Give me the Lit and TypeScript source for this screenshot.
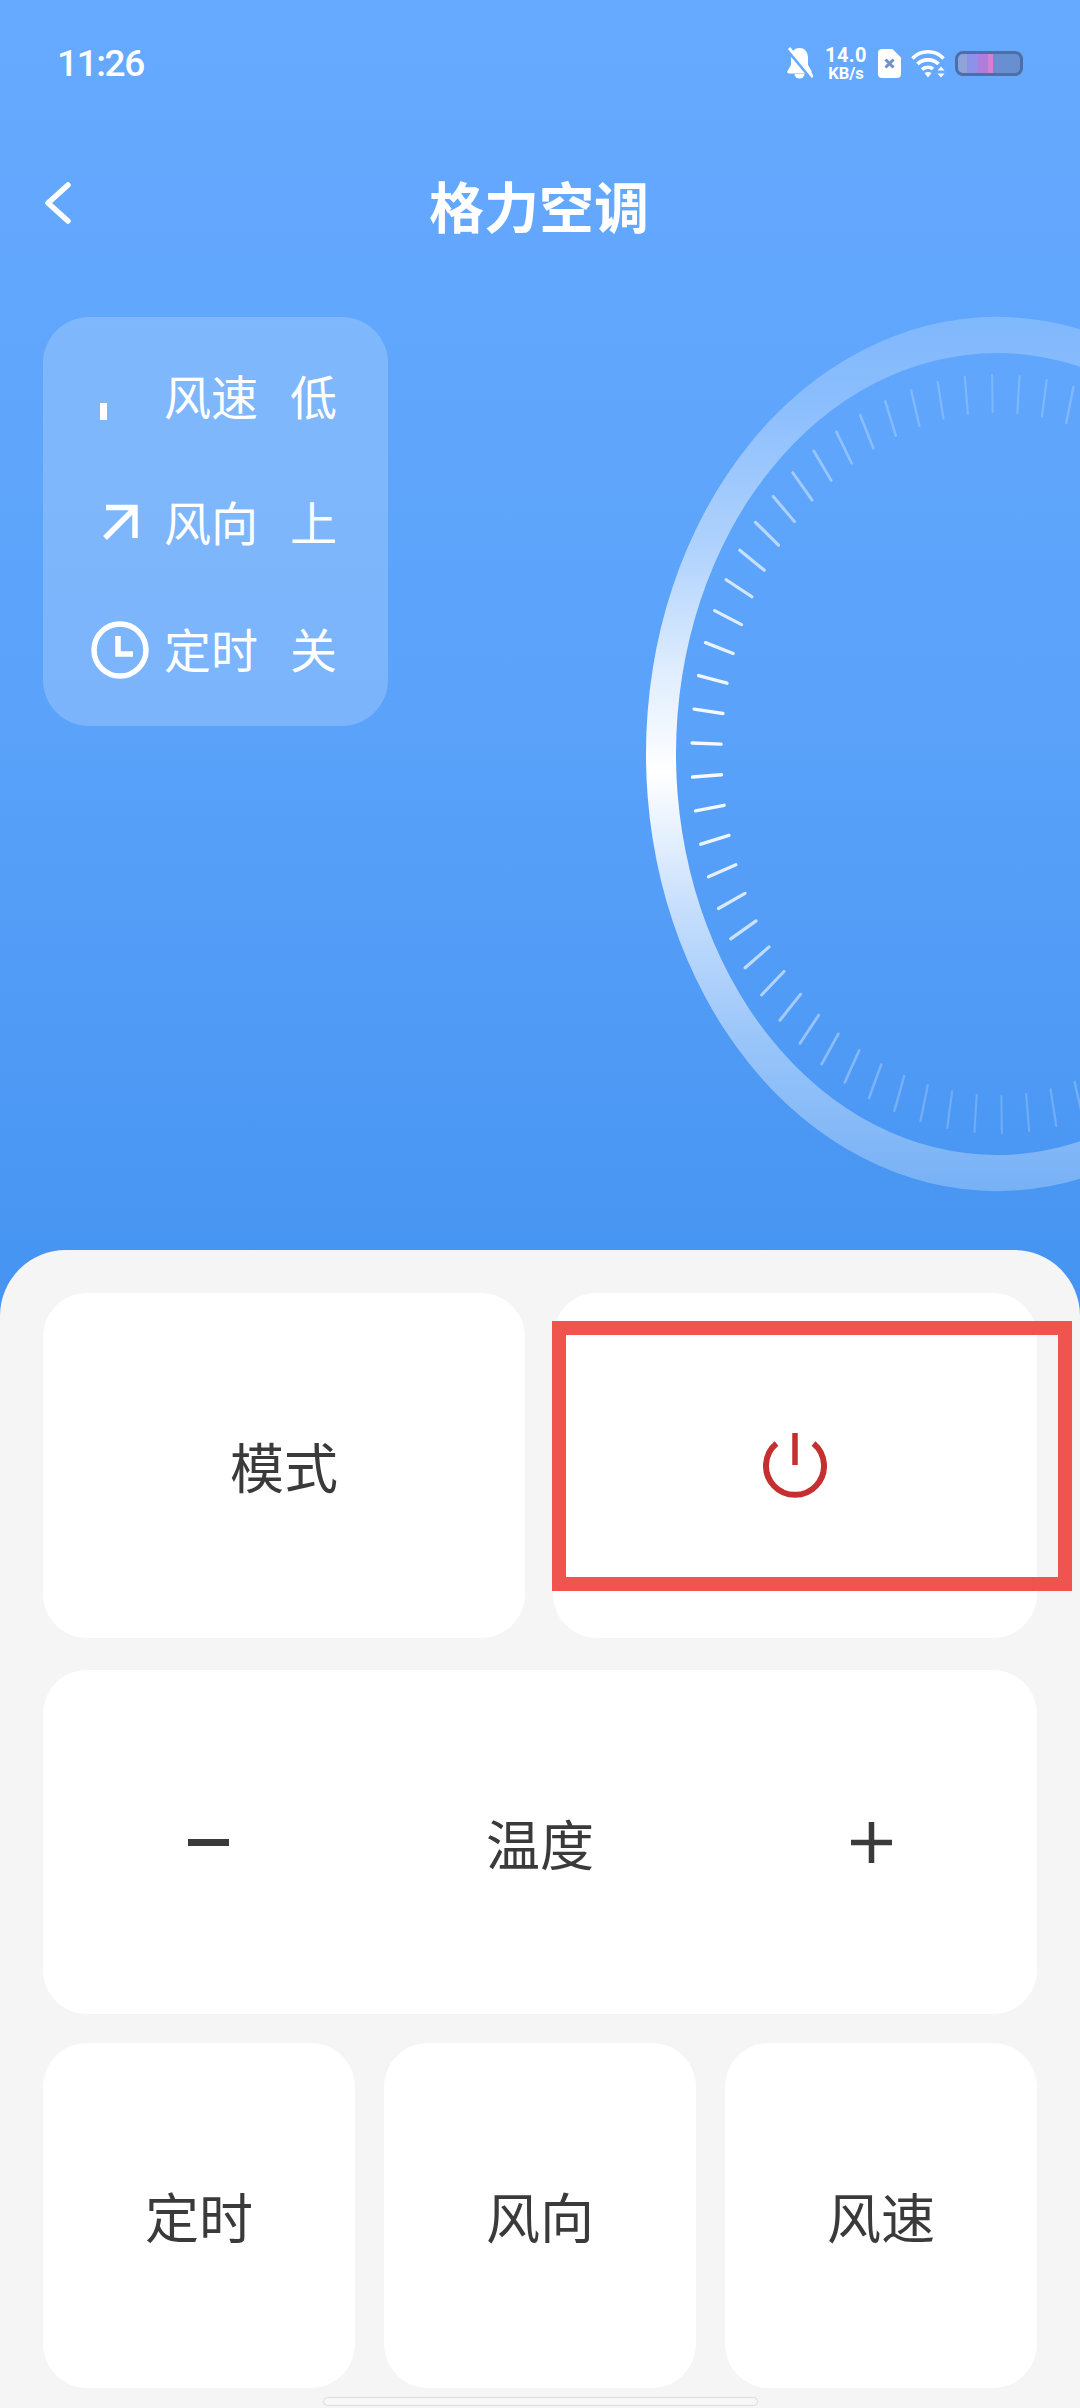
import { LitElement, html, css, svg } from 'lit';
import { customElement } from 'lit/decorators.js';

// dial is an ellipse in the reference, everything measured from the screenshot
const CX = 997;
const CY = 754;
const TICK_COUNT = 70;

function dialTicks() {
  const out = [];
  for (let k = 0; k < TICK_COUNT; k++) {
    const deg = 1.66 + (k * 360) / TICK_COUNT;
    const a = (deg * Math.PI) / 180;
    const c = Math.cos(a);
    const s = Math.sin(a);
    const x1 = CX - 305 * c;
    const y1 = CY - 379 * s;
    const x2 = CX - 276 * c;
    const y2 = CY - 342 * s;
    if (x2 > 1090) continue;
    const alpha = 0.2 + 0.75 * Math.pow(Math.abs(c), 3);
    const width = 2 + 1.4 * Math.abs(c);
    out.push(svg`<line x1=${x1} y1=${y1} x2=${x2} y2=${y2} stroke="#fff" stroke-opacity=${alpha} stroke-width=${width} stroke-linecap="round"></line>`);
  }
  return out;
}

function ellipsePath(rx: number, ry: number) {
  return `M${CX - rx} ${CY}a${rx} ${ry} 0 1 0 ${rx * 2} 0a${rx} ${ry} 0 1 0 ${-rx * 2} 0Z`;
}

const speedIcon = html`<svg width="60" height="60" viewBox="0 0 60 60"><rect x="10" y="36" width="7" height="17" fill="#fff"></rect></svg>`;
const arrowIcon = html`<svg width="60" height="60" viewBox="0 0 60 60" fill="none" stroke="#fff" stroke-width="5.5"><path d="M16 13.500H45V44"></path><path d="M45 14L15 44"></path></svg>`;
const clockIcon = html`<svg width="60" height="60" viewBox="0 0 60 60" fill="none" stroke="#fff" stroke-width="5.5"><circle cx="30" cy="30" r="26"></circle><path d="M28 16V34H43"></path></svg>`;

const panelRows = [
  { icon: speedIcon, label: '风速', value: '低' },
  { icon: arrowIcon, label: '风向', value: '上' },
  { icon: clockIcon, label: '定时', value: '关' },
];

@customElement('app-root')
export class AppRoot extends LitElement {
  static styles = css`
    :host {
      display: flex;
      flex-direction: column;
      position: relative;
      width: 1080px;
      height: 2408px;
      overflow: hidden;
      background: linear-gradient(180deg, #66aaff 0%, #5aa2fa 30%, #4795f2 52%, #4795f2 100%);
      font-family: 'Noto Sans CJK SC', 'Noto Sans', sans-serif;
    }

    .dial {
      position: absolute;
      left: 0;
      top: 0;
    }

    .status {
      position: relative;
      display: flex;
      align-items: center;
      justify-content: space-between;
      height: 126px;
      padding: 0 57px 0 57px;
      box-sizing: border-box;
      color: #fff;
    }
    .time {
      font: 500 37px Roboto, sans-serif;
      letter-spacing: -1.4px;
    }
    .status-icons {
      display: flex;
      align-items: center;
      height: 36px;
    }
    .bell {
      margin-right: 10px;
    }
    .speed {
      display: flex;
      flex-direction: column;
      align-items: center;
      width: 46px;
      font-family: Roboto, sans-serif;
      font-weight: 700;
      margin-right: 9px;
    }
    .speed b {
      font-size: 20px;
      line-height: 20px;
      font-weight: 700;
      letter-spacing: 0.4px;
    }
    .speed span {
      font-size: 16.5px;
      line-height: 16px;
      margin-top: 1px;
    }
    .sim {
      margin-right: 10px;
    }
    .wifi {
      margin-right: 9px;
    }
    .battery {
      width: 68px;
      height: 25px;
      box-sizing: border-box;
      border: 3px solid #4d6fa9;
      border-radius: 8px;
      background: linear-gradient(90deg, #8ea4d8 0 14%, #8c92e8 14% 32%, #b07ddc 32% 48%, #d880d0 48% 56%, #6a8fd0 56% 100%);
    }

    .nav {
      position: relative;
      display: flex;
      align-items: center;
      justify-content: center;
      height: 156px;
    }
    .back {
      position: absolute;
      left: 43px;
      top: 56px;
    }
    .title {
      color: #fff;
      font-size: 55px;
      font-weight: 700;
      line-height: 1;
      margin-left: -2px;
    }

    .hero {
      position: relative;
      flex: 1;
      padding: 35px 0 0 43px;
    }
    .panel {
      width: 345px;
      height: 409px;
      box-sizing: border-box;
      padding: 17px 0 0 47px;
      border-radius: 46px;
      background: rgba(255, 255, 255, 0.2);
      color: #fff;
      font-size: 47px;
    }
    .panel-row {
      display: flex;
      align-items: center;
      height: 126.5px;
    }
    .panel-row svg {
      flex: none;
      margin-right: 14px;
    }
    .panel-row span {
      margin-top: -6px;
    }
    .panel-row .label {
      width: 94px;
      margin-right: 32px;
    }

    .sheet {
      position: relative;
      height: 1158px;
      box-sizing: border-box;
      padding: 43px 43px 0;
      border-radius: 66px 66px 0 0;
      background: #f5f5f5;
      color: #3a3a3a;
      font-size: 54px;
    }
    .card {
      display: flex;
      align-items: center;
      justify-content: center;
      height: 345px;
      border-radius: 44px;
      background: #fff;
    }
    .row-2 {
      display: grid;
      grid-template-columns: 482px 484px;
      gap: 28px;
    }
    .row-3 {
      display: grid;
      grid-template-columns: repeat(3, 312px);
      justify-content: space-between;
    }
    .temp {
      display: grid;
      grid-template-columns: 1fr auto 1fr;
      height: 344px;
      margin: 32px 0 29px;
    }
    .temp .minus {
      justify-self: start;
      margin-left: 145px;
      width: 41px;
      height: 7px;
      background: #3a3a3a;
    }
    .temp .plus {
      justify-self: end;
      margin-right: 145px;
    }
    .home {
      width: 435px;
      height: 9px;
      box-sizing: border-box;
      margin: 9px auto 0;
      border: 1px solid #dcdcdc;
      border-radius: 5px;
      background: #f7f7f7;
    }

    .mark {
      position: absolute;
      left: 552px;
      top: 1321px;
      width: 520px;
      height: 270px;
      box-sizing: border-box;
      border: 14px solid #f0544e;
    }
  `;

  render() {
    return html`
      <svg class="dial" width="1080" height="1250" viewBox="0 0 1080 1250">
        <defs>
          <linearGradient id="ring" gradientUnits="userSpaceOnUse" x1="0" y1="317" x2="0" y2="1192">
            <stop offset="0" stop-color="#fff" stop-opacity="0.2"></stop>
            <stop offset="0.095" stop-color="#fff" stop-opacity="0.27"></stop>
            <stop offset="0.27" stop-color="#fff" stop-opacity="0.52"></stop>
            <stop offset="0.4" stop-color="#fff" stop-opacity="0.8"></stop>
            <stop offset="0.52" stop-color="#fff" stop-opacity="1"></stop>
            <stop offset="0.68" stop-color="#fff" stop-opacity="0.66"></stop>
            <stop offset="0.83" stop-color="#fff" stop-opacity="0.42"></stop>
            <stop offset="1" stop-color="#fff" stop-opacity="0.25"></stop>
          </linearGradient>
        </defs>
        <path d="${ellipsePath(351, 437)}${ellipsePath(321, 401)}" fill="url(#ring)" fill-rule="evenodd"></path>
        ${dialTicks()}
      </svg>

      <div class="status">
        <span class="time">11:26</span>
        <div class="status-icons">
          <svg class="bell" width="27" height="32" viewBox="0 0 27 32">
            <path d="M13.500 1C7.500 1 5 6 5 11v7l-3.500 6c-.7 1.300.2 2.500 1.500 2.500h21c1.300 0 2.200-1.200 1.500-2.500L22 18v-7c0-5-2.500-10-8.500-10z" fill="#fff"></path>
            <path d="M8.500 27a5 4.500 0 0 0 10 0z" fill="#fff"></path>
            <path d="M1 1L26 31" stroke="#66aaff" stroke-width="5"></path>
            <path d="M3 1L27 30" stroke="#fff" stroke-width="2.800"></path>
          </svg>
          <div class="speed"><b>14.0</b><span>KB/s</span></div>
          <svg class="sim" width="23" height="29" viewBox="0 0 23 29">
            <path d="M4 0H14.500L23 8.500V25a4 4 0 0 1-4 4H4a4 4 0 0 1-4-4V4a4 4 0 0 1 4-4z" fill="#fff"></path>
            <path d="M7.500 10.500L15.500 18.500M15.500 10.500L7.500 18.500" stroke="#6f93c8" stroke-width="3"></path>
          </svg>
          <svg class="wifi" width="35" height="29" viewBox="0 0 35 29" fill="none" stroke="#fff" stroke-width="3.600">
            <path d="M1.500 9.500C9.500 .5 24.500 .5 32.500 9.500"></path>
            <path d="M6.500 15C11.500 9.500 22.500 9.500 27.500 15"></path>
            <path d="M11 20.500C14 17.500 19.500 17.500 22 20"></path>
            <path d="M13.500 24L17 28.500L20.500 24C18.500 22.500 15.500 22.500 13.500 24Z" fill="#fff" stroke="none"></path>
            <path d="M26.500 21.500L30 17.500L33.500 21.500ZM26.500 24.500H33.500L30 28.500Z" fill="#fff" stroke="none"></path>
          </svg>
          <div class="battery"></div>
        </div>
      </div>

      <div class="nav">
        <svg class="back" width="28" height="42" viewBox="0 0 28 42" fill="none" stroke="#fff" stroke-width="5.500" stroke-linecap="round" stroke-linejoin="round">
          <path d="M25 3L5 21L25 39"></path>
        </svg>
        <span class="title">格力空调</span>
      </div>

      <div class="hero">
        <div class="panel">
          ${panelRows.map(
            (row) => html`
              <div class="panel-row">
                ${row.icon}
                <span class="label">${row.label}</span>
                <span>${row.value}</span>
              </div>
            `
          )}
        </div>
      </div>

      <div class="sheet">
        <div class="row-2">
          <div class="card">模式</div>
          <div class="card">
            <svg width="64" height="66" viewBox="0 0 64 66" fill="none" stroke="#c62f2f" stroke-width="6">
              <path d="M13.500 10.500A29 29 0 1 0 50.500 10.500"></path>
              <path d="M32 0V32" stroke-width="5.500"></path>
            </svg>
          </div>
        </div>
        <div class="card temp">
          <span class="minus"></span>
          <span>温度</span>
          <svg class="plus" width="41" height="41" viewBox="0 0 41 41" fill="#3a3a3a">
            <rect x="0" y="17.750" width="41" height="5.500"></rect>
            <rect x="17.750" y="0" width="5.500" height="41"></rect>
          </svg>
        </div>
        <div class="row-3">
          <div class="card">定时</div>
          <div class="card">风向</div>
          <div class="card">风速</div>
        </div>
        <div class="home"></div>
      </div>

      <div class="mark"></div>
    `;
  }
}
